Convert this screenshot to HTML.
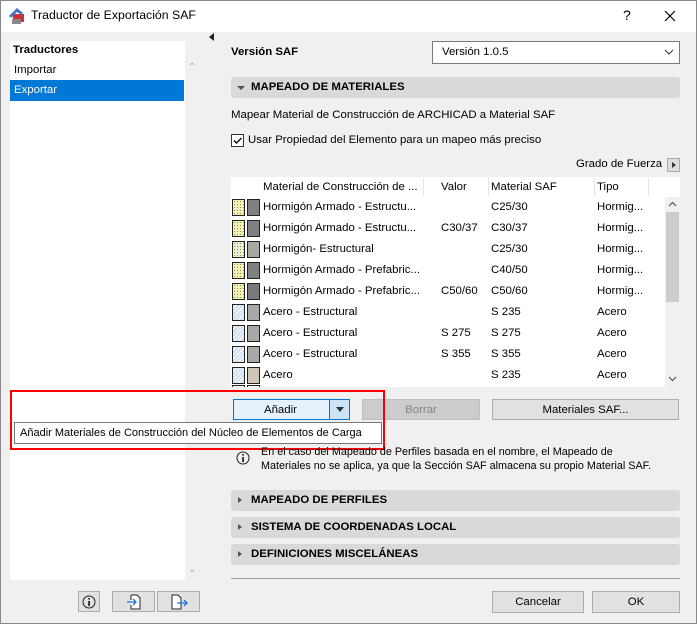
<!DOCTYPE html>
<html><head><meta charset="utf-8"><style>
*{box-sizing:border-box;margin:0;padding:0}
body{width:697px;height:624px;overflow:hidden;background:#f0f0f0;font-family:"Liberation Sans",sans-serif;font-size:11.4px;color:#000;position:relative}
.a{position:absolute;white-space:nowrap}
.btn{position:absolute;background:#e1e1e1;border:1px solid #adadad;text-align:center;line-height:20px}
.sec{position:absolute;left:231px;width:449px;height:21px;background:#d9d9d9;border-radius:3px;font-weight:bold;line-height:21px;padding-left:20px;font-size:11.4px}
.sec:before{content:"";position:absolute;left:7px;top:7px;border-left:4px solid #555;border-top:3.5px solid transparent;border-bottom:3.5px solid transparent}
.sec.open:before{left:6px;top:9px;border-top:4px solid #555;border-left:4px solid transparent;border-right:4px solid transparent;border-bottom:0}
.row{position:absolute;left:231px;width:434px;height:21px;line-height:21px}
.row span{position:absolute}
.i1{position:absolute;left:1px;top:2px;width:13px;height:17px;border:1px solid #222}
.i2{position:absolute;left:16px;top:2px;width:13px;height:17px;border:1px solid #222}
.c{background:#f4f0c0;background-image:radial-gradient(#9a9a20 0.7px,transparent 0.8px);background-size:3px 3px}
.s{background:repeating-linear-gradient(135deg,#cfe0f5 0 2px,#fff 2px 3px)}
</style></head><body>
<div class="a" style="left:0;top:0;width:697px;height:32px;background:#fff"></div>
<svg class="a" style="left:8px;top:7px" width="18" height="18"><rect x="5" y="7" width="11" height="8" fill="#c33" /><path d="M2 10 L9 3 L14 7" stroke="#4477cc" stroke-width="3" fill="none"/><rect x="4" y="12" width="9" height="5" fill="#888"/></svg>
<div class="a" style="left:31px;top:8px;font-size:12.3px">Traductor de Exportación SAF</div>
<div class="a" style="left:623px;top:7px;font-size:14px">?</div>
<svg class="a" style="left:664px;top:10px" width="12" height="12"><path d="M1 1L11 11M11 1L1 11" stroke="#000" stroke-width="1.2"/></svg>

<div class="a" style="left:10px;top:41px;width:175px;height:539px;background:#fff"></div>
<div class="a" style="left:13px;top:44px;font-weight:bold">Traductores</div>
<div class="a" style="left:14px;top:64px">Importar</div>
<div class="a" style="left:10px;top:80px;width:174px;height:21px;background:#0078d7;color:#fff;padding:4px 0 0 4px">Exportar</div>
<div class="a" style="left:188px;top:62px;color:#aaa;font-size:10px">⌃</div>
<div class="a" style="left:188px;top:564px;color:#aaa;font-size:10px">⌄</div>
<div class="a" style="left:209px;top:33px;border-right:5px solid #222;border-top:4px solid transparent;border-bottom:4px solid transparent"></div>

<div class="btn" style="left:78px;top:591px;width:22px;height:21px"><svg width="14" height="14" style="margin-top:3px"><circle cx="7" cy="7" r="6" fill="none" stroke="#222"/><rect x="6.3" y="6" width="1.5" height="5"/><rect x="6.3" y="3" width="1.5" height="1.5"/></svg></div>
<div class="btn" style="left:112px;top:591px;width:43px;height:21px"><svg width="16" height="18" style="margin-top:1px"><path d="M5 2h6l3 3v11H5v-4M5 7V2" fill="#fff" stroke="#222"/><path d="M1 9h9M7 6l3 3-3 3" stroke="#1a73e8" fill="none" stroke-width="1.3"/></svg></div>
<div class="btn" style="left:157px;top:591px;width:43px;height:21px"><svg width="18" height="18" style="margin-top:1px"><path d="M2 2h6l3 3v11H2z" fill="#fff" stroke="#222"/><path d="M7 10h10M14 7l3 3-3 3" stroke="#1a73e8" fill="none" stroke-width="1.3"/></svg></div>

<div class="a" style="left:231px;top:46px;font-weight:bold">Versión SAF</div>
<div class="a" style="left:432px;top:41px;width:248px;height:23px;background:#fff;border:1px solid #7a7a7a;padding:4px 0 0 9px">Versión 1.0.5</div>
<svg class="a" style="left:664px;top:48px" width="10" height="8"><path d="M1 2l4 4 4-4" stroke="#333" fill="none"/></svg>

<div class="sec open" style="top:77px">MAPEADO DE MATERIALES</div>
<div class="a" style="left:231px;top:109px">Mapear Material de Construcción de ARCHICAD a Material SAF</div>
<div class="a" style="left:231px;top:134px;width:13px;height:13px;border:1px solid #333;background:#fff"><svg width="11" height="11" style="position:absolute;left:0;top:0"><path d="M2 5.5l2.5 2.5L9.5 3" stroke="#000" stroke-width="1.4" fill="none"/></svg></div>
<div class="a" style="left:248px;top:134px">Usar Propiedad del Elemento para un mapeo más preciso</div>
<div class="a" style="left:576px;top:158px">Grado de Fuerza</div>
<div class="a" style="left:667px;top:158px;width:13px;height:14px;background:#ddd;border:1px solid #aaa"><div style="position:absolute;left:4px;top:3px;border-left:4px solid #333;border-top:3.5px solid transparent;border-bottom:3.5px solid transparent"></div></div>

<div class="a" style="left:231px;top:177px;width:449px;height:210px;background:#fff"></div>
<div class="a" style="left:263px;top:181px">Material de Construcción de ...</div>
<div class="a" style="left:423px;top:178px;height:18px;border-left:1px solid #e5e5e5"></div>
<div class="a" style="left:441px;top:181px">Valor</div>
<div class="a" style="left:488px;top:178px;height:18px;border-left:1px solid #e5e5e5"></div>
<div class="a" style="left:491px;top:181px">Material SAF</div>
<div class="a" style="left:594px;top:178px;height:18px;border-left:1px solid #e5e5e5"></div>
<div class="a" style="left:597px;top:181px">Tipo</div>
<div class="a" style="left:648px;top:178px;height:18px;border-left:1px solid #e5e5e5"></div>
<div class="a" style="left:665px;top:197px;width:15px;height:190px;background:#f0f0f0"></div>
<div class="a" style="left:666px;top:212px;width:13px;height:90px;background:#cdcdcd"></div>
<svg class="a" style="left:668px;top:201px" width="9" height="6"><path d="M1 5l3.5-3.5L8 5" stroke="#555" fill="none" stroke-width="1.2"/></svg>
<svg class="a" style="left:668px;top:376px" width="9" height="6"><path d="M1 1l3.5 3.5L8 1" stroke="#555" fill="none" stroke-width="1.2"/></svg>

<div class="row" style="top:197px"><i class="i1 c"></i><i class="i2" style="background:#808080"></i><span style="left:32px">Hormigón Armado - Estructu...</span><span style="left:260px">C25/30</span><span style="left:366px">Hormig...</span></div>
<div class="row" style="top:218px"><i class="i1 c"></i><i class="i2" style="background:#808080"></i><span style="left:32px">Hormigón Armado - Estructu...</span><span style="left:210px">C30/37</span><span style="left:260px">C30/37</span><span style="left:366px">Hormig...</span></div>
<div class="row" style="top:239px"><i class="i1 c" style="background-color:#e8f2e0"></i><i class="i2" style="background:#a8a8a0"></i><span style="left:32px">Hormigón- Estructural</span><span style="left:260px">C25/30</span><span style="left:366px">Hormig...</span></div>
<div class="row" style="top:260px"><i class="i1 c"></i><i class="i2" style="background:#808080"></i><span style="left:32px">Hormigón Armado - Prefabric...</span><span style="left:260px">C40/50</span><span style="left:366px">Hormig...</span></div>
<div class="row" style="top:281px"><i class="i1 c"></i><i class="i2" style="background:#7a7a7a"></i><span style="left:32px">Hormigón Armado - Prefabric...</span><span style="left:210px">C50/60</span><span style="left:260px">C50/60</span><span style="left:366px">Hormig...</span></div>
<div class="row" style="top:302px"><i class="i1 s"></i><i class="i2" style="background:#a8a8a8"></i><span style="left:32px">Acero - Estructural</span><span style="left:260px">S 235</span><span style="left:366px">Acero</span></div>
<div class="row" style="top:323px"><i class="i1 s"></i><i class="i2" style="background:#a8a8a8"></i><span style="left:32px">Acero - Estructural</span><span style="left:210px">S 275</span><span style="left:260px">S 275</span><span style="left:366px">Acero</span></div>
<div class="row" style="top:344px"><i class="i1 s"></i><i class="i2" style="background:#a8a8a8"></i><span style="left:32px">Acero - Estructural</span><span style="left:210px">S 355</span><span style="left:260px">S 355</span><span style="left:366px">Acero</span></div>
<div class="row" style="top:365px"><i class="i1 s"></i><i class="i2" style="background:#ccc5b8"></i><span style="left:32px">Acero</span><span style="left:260px">S 235</span><span style="left:366px">Acero</span></div>
<div class="a" style="left:232px;top:385px;width:13px;height:2px;border:1px solid #222;border-bottom:0"></div>
<div class="a" style="left:247px;top:385px;width:13px;height:2px;border:1px solid #222;border-bottom:0"></div>

<div class="btn" style="left:233px;top:399px;width:117px;height:21px;border:1px solid #0078d7;background:#e5f1fb;text-align:left;padding-left:30px">Añadir</div>
<div class="a" style="left:329px;top:400px;width:20px;height:19px;border-left:1px solid #0078d7;background:#cce4f7"><div style="position:absolute;left:6px;top:7px;border-top:5px solid #333;border-left:4px solid transparent;border-right:4px solid transparent"></div></div>
<div class="btn" style="left:362px;top:399px;width:118px;height:21px;background:#ccc;border-color:#bfbfbf;color:#838383">Borrar</div>
<div class="btn" style="left:492px;top:399px;width:187px;height:21px">Materiales SAF...</div>

<div class="a" style="left:14px;top:422px;width:368px;height:22px;background:#fff;border:1px solid #767676;padding:4px 0 0 5px;font-size:11px">Añadir Materiales de Construcción del Núcleo de Elementos de Carga</div>
<div class="a" style="left:10px;top:390px;width:375px;height:60px;border:2px solid #f00"></div>

<svg class="a" style="left:236px;top:451px" width="14" height="14"><circle cx="7" cy="7" r="6" fill="none" stroke="#222"/><rect x="6.3" y="6" width="1.5" height="5"/><rect x="6.3" y="3" width="1.5" height="1.5"/></svg>
<div class="a" style="left:261px;top:445px;line-height:14px;font-size:10.8px">En el caso del Mapeado de Perfiles basada en el nombre, el Mapeado de<br>Materiales no se aplica, ya que la Sección SAF almacena su propio Material SAF.</div>

<div class="sec" style="top:490px">MAPEADO DE PERFILES</div>
<div class="sec" style="top:517px">SISTEMA DE COORDENADAS LOCAL</div>
<div class="sec" style="top:544px">DEFINICIONES MISCELÁNEAS</div>
<div class="a" style="left:231px;top:578px;width:449px;border-top:1px solid #a0a0a0"></div>
<div class="btn" style="left:492px;top:591px;width:92px;height:22px">Cancelar</div>
<div class="btn" style="left:592px;top:591px;width:88px;height:22px">OK</div>
<div class="a" style="left:0;top:0;width:697px;height:624px;border:1px solid #888;pointer-events:none"></div>
</body></html>
